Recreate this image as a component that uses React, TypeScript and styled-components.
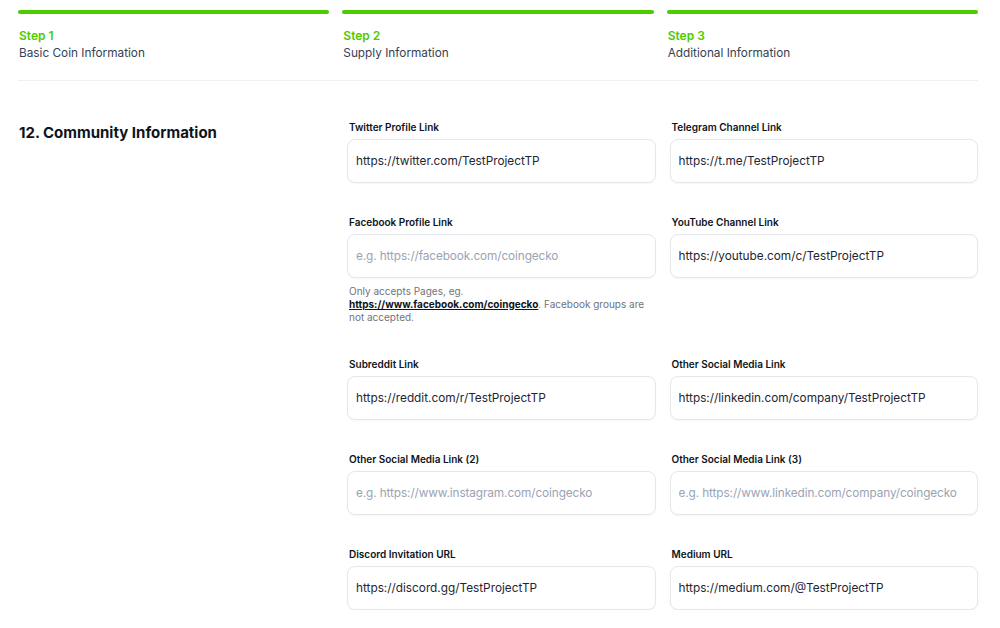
import React from "react";
import styled, { createGlobalStyle } from "styled-components";

const Global = createGlobalStyle`
  html, body { margin: 0; padding: 0; background: #ffffff; }
  body { font-family: Inter, "Noto Sans", Arial, sans-serif; color: #0d1421; }
  * { box-sizing: border-box; }
`;

const Page = styled.div`
  padding: 10px 22px 0 18px;
  width: 1000px;
`;

const Steps = styled.div`
  display: grid;
  grid-template-columns: repeat(3, 1fr);
  gap: 13px;
`;

const Step = styled.div`
  display: flex;
  flex-direction: column;
`;

const Bar = styled.div`
  height: 4px;
  border-radius: 2px;
  background: #4bcc00;
`;

const StepTitle = styled.div`
  margin-top: 14px;
  padding-left: 1px;
  font-size: 12px;
  line-height: 16px;
  font-weight: 600;
  color: #4bcc00;
`;

const StepSub = styled.div`
  margin-top: 1px;
  padding-left: 1px;
  font-size: 11.8px;
  line-height: 16px;
  color: #364152;
`;

const Divider = styled.hr`
  margin: 19px 0 0;
  border: none;
  border-top: 1px solid #eef0f3;
`;

const Section = styled.section`
  display: grid;
  grid-template-columns: 329px 1fr;
  padding-top: 39px;
`;

const Heading = styled.h2`
  margin: 3px 0 0;
  padding-left: 1px;
  font-size: 15px;
  line-height: 20px;
  font-weight: 700;
  color: #0d1421;
`;

const Form = styled.div`
  display: grid;
  grid-template-columns: 1fr 1fr;
  column-gap: 14px;
  row-gap: 32px;
  align-items: start;
`;

const Field = styled.div`
  display: flex;
  flex-direction: column;
`;

const Label = styled.label`
  padding-left: 2px;
  font-size: 10px;
  line-height: 14px;
  font-weight: 600;
  color: #0d1421;
  margin-bottom: 5px;
`;

const Input = styled.input`
  height: 44px;
  width: 100%;
  border: 1px solid #e4e8ed;
  border-radius: 8px;
  padding: 0 8px 1px;
  font-family: inherit;
  font-size: 11.8px;
  color: #1e2533;
  background: #fff;
  box-shadow: 0 1px 2px rgba(16, 24, 40, 0.04);
  outline: none;
  &::placeholder { color: #9aa3b4; letter-spacing: -0.1px; }
`;

const Help = styled.p`
  margin: 7px 0 0;
  padding: 0 6px 1px 2px;
  font-size: 10px;
  line-height: 13px;
  color: #6f737b;
`;

const HelpLink = styled.a`
  color: #0d1421;
  font-weight: 700;
  text-decoration: underline;
`;

type F = { label: string; value?: string; placeholder?: string; help?: boolean };

const fields: F[] = [
  { label: "Twitter Profile Link", value: "https://twitter.com/TestProjectTP" },
  { label: "Telegram Channel Link", value: "https://t.me/TestProjectTP" },
  { label: "Facebook Profile Link", placeholder: "e.g. https://facebook.com/coingecko", help: true },
  { label: "YouTube Channel Link", value: "https://youtube.com/c/TestProjectTP" },
  { label: "Subreddit Link", value: "https://reddit.com/r/TestProjectTP" },
  { label: "Other Social Media Link", value: "https://linkedin.com/company/TestProjectTP" },
  { label: "Other Social Media Link (2)", placeholder: "e.g. https://www.instagram.com/coingecko" },
  { label: "Other Social Media Link (3)", placeholder: "e.g. https://www.linkedin.com/company/coingecko" },
  { label: "Discord Invitation URL", value: "https://discord.gg/TestProjectTP" },
  { label: "Medium URL", value: "https://medium.com/@TestProjectTP" },
];

const steps = [
  ["Step 1", "Basic Coin Information"],
  ["Step 2", "Supply Information"],
  ["Step 3", "Additional Information"],
];

export default function App() {
  return (
    <Page>
      <Global />
      <Steps>
        {steps.map(([t, s]) => (
          <Step key={t}>
            <Bar />
            <StepTitle>{t}</StepTitle>
            <StepSub>{s}</StepSub>
          </Step>
        ))}
      </Steps>
      <Divider />
      <Section>
        <Heading>12. Community Information</Heading>
        <Form>
          {fields.map((f) => (
            <Field key={f.label}>
              <Label>{f.label}</Label>
              <Input defaultValue={f.value} placeholder={f.placeholder} />
              {f.help && (
                <Help>
                  Only accepts Pages, eg.
                  <br />
                  <HelpLink href="#">https://www.facebook.com/coingecko</HelpLink>. Facebook groups are not accepted.
                </Help>
              )}
            </Field>
          ))}
        </Form>
      </Section>
    </Page>
  );
}
